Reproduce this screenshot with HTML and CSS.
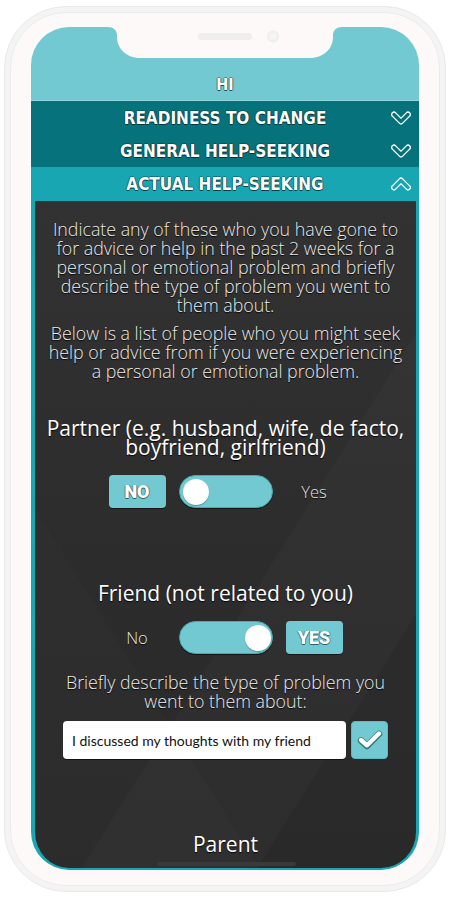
FILE: index.html
```html
<!DOCTYPE html>
<html lang="en">
<head>
<meta charset="utf-8">
<title>Help-seeking</title>
<link rel="stylesheet" href="styles.css">
</head>
<body>
<div class="phone">
  <div class="bezel">
    <div class="screen">
      <svg class="notch" width="234" height="31" viewBox="0 0 234 31" aria-hidden="true">
        <path d="M0 0 H234 C229 0 225 3 225 8 V10 C225 22 215 31 202 31 H32 C19 31 9 22 9 10 V8 C9 3 5 0 0 0 Z" fill="#fcf9f8"/>
        <rect x="90" y="6" width="54" height="7" rx="3.5" fill="#eeeeee"/>
        <circle cx="165" cy="9.5" r="6" fill="#efefef"/>
        <circle cx="165" cy="9.5" r="3.5" fill="#f6f5f5"/>
      </svg>

      <header class="top"><span class="hi">HI</span></header>

      <div class="acc acc-closed">
        <h2 class="acc-title">READINESS TO CHANGE</h2>
        <svg class="chev" width="20" height="14" viewBox="0 0 20 14" aria-hidden="true">
          <polyline points="3,3.5 10,10.5 17,3.5" fill="none" stroke="#fff" stroke-width="6" stroke-linecap="round" stroke-linejoin="round"/>
          <polyline points="3,3.5 10,10.5 17,3.5" fill="none" stroke="#06727b" stroke-width="3.4" stroke-linecap="round" stroke-linejoin="round"/>
        </svg>
      </div>
      <div class="acc acc-closed">
        <h2 class="acc-title">GENERAL HELP-SEEKING</h2>
        <svg class="chev" width="20" height="14" viewBox="0 0 20 14" aria-hidden="true">
          <polyline points="3,3.5 10,10.5 17,3.5" fill="none" stroke="#fff" stroke-width="6" stroke-linecap="round" stroke-linejoin="round"/>
          <polyline points="3,3.5 10,10.5 17,3.5" fill="none" stroke="#06727b" stroke-width="3.4" stroke-linecap="round" stroke-linejoin="round"/>
        </svg>
      </div>
      <div class="acc acc-open">
        <h2 class="acc-title">ACTUAL HELP-SEEKING</h2>
        <svg class="chev" width="20" height="14" viewBox="0 0 20 14" aria-hidden="true">
          <polyline points="3,10.5 10,3.5 17,10.5" fill="none" stroke="#fff" stroke-width="6" stroke-linecap="round" stroke-linejoin="round"/>
          <polyline points="3,10.5 10,3.5 17,10.5" fill="none" stroke="#18a6b2" stroke-width="3.4" stroke-linecap="round" stroke-linejoin="round"/>
        </svg>
      </div>

      <section class="panel">
        <p class="intro">Indicate any of these who you have gone to for advice or help in the past 2 weeks for a personal or emotional problem and briefly describe the type of problem you went to them about.</p>
        <p class="intro intro-second">Below is a list of people who you might seek help or advice from if you were experiencing a personal or emotional problem.</p>

        <div class="person person-first">
          <h3 class="person-title">Partner (e.g. husband, wife, de facto, boyfriend, girlfriend)</h3>
          <div class="choice">
            <span class="pill">NO</span>
            <span class="toggle"><span class="knob"></span></span>
            <span class="opt">Yes</span>
          </div>
        </div>

        <div class="person">
          <h3 class="person-title">Friend (not related to you)</h3>
          <div class="choice">
            <span class="opt">No</span>
            <span class="toggle toggle-on"><span class="knob"></span></span>
            <span class="pill">YES</span>
          </div>
          <p class="describe">Briefly describe the type of problem you went to them about:</p>
          <div class="answer">
            <div class="field">I discussed my thoughts with my friend</div>
            <span class="ok">
              <svg width="26" height="20" viewBox="0 0 26 20" aria-hidden="true">
                <polyline points="4,10.5 10,16 22,4" fill="none" stroke="#2f7d84" stroke-width="6.5" stroke-linecap="round" stroke-linejoin="round"/>
                <polyline points="4,10 10,15.3 22,3.5" fill="none" stroke="#fff" stroke-width="4.4" stroke-linecap="round" stroke-linejoin="round"/>
              </svg>
            </span>
          </div>
        </div>

        <div class="person">
          <h3 class="person-title">Parent</h3>
        </div>
      </section>

      <div class="home-bar"></div>
    </div>
  </div>
</div>
</body>
</html>
```

FILE: styles.css
```css
html, body {
  margin: 0;
  padding: 0;
  background: #ffffff;
}

.phone {
  box-sizing: border-box;
  width: 442px;
  height: 886px;
  margin: 6px 4px 0;
  border: 1px solid #e9e9e9;
  border-radius: 62px;
  background: #f4f4f4;
  padding: 5px;
}

.bezel {
  box-sizing: border-box;
  height: 100%;
  border: 1px solid #ececec;
  border-radius: 56px;
  background: #fcf9f8;
  padding: 14px 20px 15px;
}

.screen {
  position: relative;
  height: 100%;
  border-radius: 38px;
  overflow: hidden;
  background: #72c9d1;
  display: flex;
  flex-direction: column;
}

.notch {
  position: absolute;
  left: 77px;
  top: 0;
  display: block;
}

.top {
  flex: none;
  height: 74px;
  box-sizing: border-box;
  display: flex;
  align-items: flex-end;
  justify-content: center;
  padding-bottom: 7px;
  border-bottom: 1px solid #8fd5db;
}

.hi,
.acc-title {
  font-family: "DejaVu Sans Condensed", "Roboto Condensed", "Liberation Sans Narrow", Roboto, sans-serif;
  font-weight: 700;
  color: #ffffff;
  text-shadow: 0 1px 0 rgba(0, 40, 45, 0.8), 1px 0 0 rgba(0, 40, 45, 0.5), -1px 0 0 rgba(0, 40, 45, 0.4), 0 -1px 0 rgba(0, 40, 45, 0.35);
}

.hi {
  font-size: 16px;
  line-height: 16px;
}

.acc {
  flex: none;
  height: 33px;
  display: grid;
  grid-template-columns: 1fr auto 1fr;
  align-items: center;
  background: #06727b;
}

.acc-open {
  height: 34px;
  background: #18a6b2;
}

.acc-title {
  grid-column: 2;
  margin: 0;
  font-size: 17px;
  line-height: 20px;
  white-space: nowrap;
}

.chev {
  grid-column: 3;
  justify-self: end;
  margin-right: 8px;
  display: block;
}

.panel {
  flex: 1;
  min-height: 0;
  overflow: hidden;
  box-sizing: border-box;
  border-left: 4px solid #18a6b2;
  border-right: 3px solid #18a6b2;
  border-bottom: 2px solid #18a6b2;
  border-radius: 0 0 38px 38px;
  padding: 19px 10px 0;
  text-align: center;
  background:
    linear-gradient(122deg, transparent 58%, rgba(255, 255, 255, 0.02) 58.2%, rgba(255, 255, 255, 0.02) 80%, transparent 80.2%),
    linear-gradient(58deg, rgba(255, 255, 255, 0.012) 0%, rgba(255, 255, 255, 0.012) 28%, transparent 28.2%),
    linear-gradient(180deg, #323232 0%, #2c2c2c 55%, #292929 100%);
}

.intro,
.describe {
  margin: 0;
  font-family: "Open Sans", Lato, sans-serif;
  font-weight: 300;
  font-size: 17.8px;
  line-height: 19px;
  color: #ededed;
  text-shadow: 0 1px 1px rgba(0, 0, 0, 0.9);
}

.intro {
  padding: 0 2px;
}

.intro-second {
  margin-top: 9px;
}

.person {
  margin-top: 76px;
}

.person-first {
  margin-top: 38px;
}

.person-title {
  margin: 0;
  font-family: "Open Sans", Lato, sans-serif;
  font-weight: 400;
  font-size: 21px;
  line-height: 19px;
  color: #ffffff;
  text-shadow: 0 1px 1px rgba(0, 0, 0, 0.9);
}

.choice {
  margin-top: 18px;
  display: flex;
  justify-content: center;
  align-items: center;
  gap: 13px;
}

.pill,
.opt {
  width: 57px;
  height: 33px;
  display: flex;
  align-items: center;
  justify-content: center;
}

.pill {
  box-sizing: border-box;
  background: #72c9d1;
  border-radius: 4px;
  box-shadow: 0 1px 0 rgba(0, 0, 0, 0.5);
  font-family: Roboto, "Open Sans", sans-serif;
  font-weight: 900;
  font-size: 18px;
  color: #ffffff;
  text-shadow: 0 1px 0 rgba(20, 70, 75, 0.8), 1px 0 0 rgba(20, 70, 75, 0.5), -1px 0 0 rgba(20, 70, 75, 0.4);
}

.opt {
  font-family: "Open Sans", Lato, sans-serif;
  font-weight: 300;
  font-size: 16.5px;
  color: #e6e6e6;
  text-shadow: 0 1px 1px rgba(0, 0, 0, 0.9);
}

.toggle {
  box-sizing: border-box;
  width: 94px;
  height: 33px;
  border-radius: 17px;
  background: #72c9d1;
  border: 1px solid #4aa9b2;
  box-shadow: 0 1px 0 rgba(0, 0, 0, 0.5);
  display: flex;
  align-items: center;
  padding: 0 3px;
}

.toggle-on {
  justify-content: flex-end;
  padding: 0 1px;
}

.knob {
  width: 26px;
  height: 26px;
  border-radius: 50%;
  background: #ffffff;
  box-shadow: 0 1px 1px rgba(0, 0, 0, 0.25);
}

.describe {
  margin-top: 19px;
  padding: 0 10px;
}

.answer {
  margin-top: 10px;
  display: flex;
  justify-content: center;
  gap: 5px;
}

.field {
  box-sizing: border-box;
  width: 283px;
  height: 38px;
  background: #ffffff;
  border-radius: 4px;
  box-shadow: 0 1px 0 rgba(0, 0, 0, 0.6);
  padding: 0 9px;
  display: flex;
  align-items: center;
  text-align: left;
  font-family: Lato, "Open Sans", sans-serif;
  font-size: 14px;
  color: #111111;
}

.ok {
  box-sizing: border-box;
  width: 37px;
  height: 38px;
  background: #72c9d1;
  border: 1px solid #5cb9c2;
  border-radius: 4px;
  display: flex;
  align-items: center;
  justify-content: center;
}

.ok svg {
  display: block;
}

.home-bar {
  position: absolute;
  left: 126px;
  bottom: 4px;
  width: 139px;
  height: 4px;
  border-radius: 2px;
  background: #3a3a3a;
}
```
